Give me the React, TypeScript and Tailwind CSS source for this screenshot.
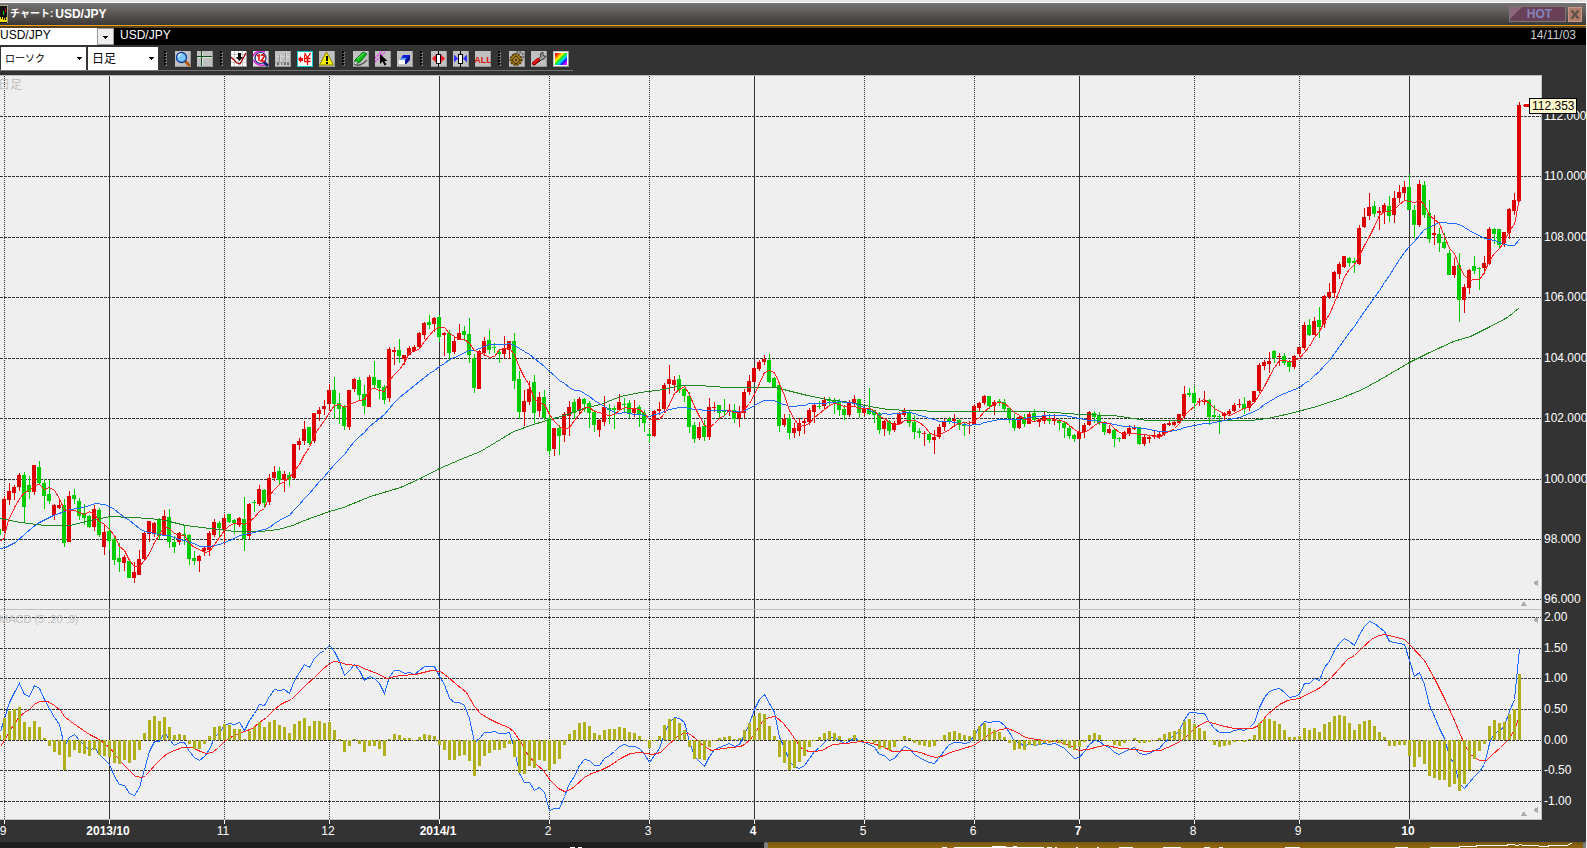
import type { ReactNode } from 'react'

type Point = [number, number]

interface Candle {
  up: boolean
  high: number
  top: number
  bottom: number
  low: number
}

const STEP = 5
const FIRST_X = 4
const ZERO_Y = 740

// u = up day, d = down day, followed by high, body top, body bottom, low
const CANDLE_DATA = `
u496,499,531,532 u483,491,500,505 u485,487,493,500 u473,475,487,491 d472,475,507,523
d476,485,492,499 u465,465,492,495 d461,467,483,484 d479,483,496,509 d480,494,501,504
u504,505,515,520 u500,505,508,509 d499,505,543,547 u491,496,542,542 d489,495,499,504
d498,501,516,520 d504,513,518,525 d515,516,527,528 u505,509,527,531 d508,510,535,537
u524,532,547,555 d516,531,541,550 d535,539,560,565 d543,558,562,572 u555,557,563,571
d559,561,578,578 u562,572,578,583 u550,559,575,575 u531,533,559,560 u521,521,534,542
u522,523,534,537 d518,520,536,540 u510,516,535,536 d509,517,542,548 d536,542,547,553
u532,533,542,545 d525,534,536,545 d534,535,559,565 d551,558,561,565 u555,556,561,572
u547,548,551,556 u531,533,550,556 u519,522,535,537 d521,523,528,538 u514,518,530,545
d514,514,522,523 d519,520,523,534 u517,518,525,527 d497,519,539,551 u503,504,536,539
d500,502,503,512 u485,489,504,506 d489,490,503,507 u474,478,502,505 u466,472,478,481
d467,471,480,485 u471,474,480,492 d472,475,480,486 u444,444,478,479 u438,441,445,450
u421,429,441,445 d427,427,443,445 u413,413,441,443 u407,410,414,421 u400,406,409,415
u384,390,404,411 d377,390,404,419 d393,403,409,424 d405,407,426,430 u390,390,427,430
u378,379,389,392 d377,380,395,401 d385,394,406,414 u375,377,407,407 d361,377,385,389
d380,380,388,399 d385,387,400,404 u347,349,398,402 u347,350,352,365 d339,350,356,363
u355,355,359,365 u346,348,355,355 u345,347,351,352 u332,333,347,349 u322,323,335,339
d315,322,325,329 u317,318,324,332 d315,317,337,342 u332,333,335,356 d330,333,353,361
u337,341,352,354 u324,333,340,340 d326,331,335,341 d318,334,355,363 d354,358,388,393
u350,351,389,389 u337,341,353,356 d330,340,350,354 d343,347,348,353 d349,352,354,363
u336,348,354,358 u341,341,350,359 d333,341,381,389 d371,379,412,419 u390,401,412,426
u381,389,402,405 d375,382,413,423 u392,397,411,417 d390,397,418,420 d405,418,451,455
u428,428,449,456 d425,428,436,455 u412,414,435,442 u401,407,416,436 d399,402,413,419
u397,399,411,415 d398,399,404,412 d401,403,413,428 d410,412,425,432 u419,420,430,437
u396,407,422,426 d404,408,410,424 d406,408,410,429 u394,402,410,411 d398,404,405,413
d400,403,413,418 u400,408,413,417 d405,407,415,427 d410,413,423,432 d429,434,436,443
u410,411,436,437 u402,409,411,415 u383,385,409,411 u365,379,384,394 u376,380,385,391
d375,379,390,393 d388,389,396,402 d392,396,427,433 d422,425,439,443 u422,427,438,440
d420,426,437,441 u398,407,437,440 u402,407,408,412 d405,405,413,419 d399,410,412,416
u404,410,411,416 d404,410,419,423 u406,412,418,427 u389,392,413,418 u375,381,392,395
u367,368,382,382 u360,362,369,371 u355,359,362,365 d354,360,382,383 d377,378,388,388
d383,385,426,432 u414,419,425,427 d414,418,433,439 u423,428,433,438 u418,423,431,436
u418,421,423,434 u408,410,422,425 u404,405,412,423 d401,406,407,409 u397,400,406,410
d397,399,401,405 d398,400,403,414 d399,401,410,416 d405,409,415,420 u400,403,415,417
u395,399,404,407 d399,399,413,418 u407,409,413,416 d388,409,414,415 d410,410,415,423
d412,413,430,434 u420,421,429,436 d420,421,431,435 u421,423,430,432 u412,414,424,424
u408,410,415,417 d411,412,423,427 d415,422,432,439 d428,431,433,438 u431,433,434,446
d432,434,440,443 u430,437,440,454 u424,427,437,439 u419,421,427,431 d417,419,421,424
u414,419,421,427 d419,420,425,430 d423,425,426,436 u421,425,426,434 u404,406,424,425
u402,403,408,411 u395,396,403,405 d396,396,406,409 u400,402,406,415 d399,401,402,406
d399,402,409,412 d407,408,418,423 d414,419,428,431 u415,417,428,429 d414,417,424,427
u412,414,424,424 d409,413,420,422 u419,420,422,427 u412,416,421,424 d414,418,421,424
u414,419,421,425 d419,420,423,430 d421,423,428,438 d426,428,436,439 d434,435,439,442
u430,432,439,439 u423,425,432,438 u411,412,425,426 d411,413,417,423 d412,415,423,425
d421,422,432,435 u425,429,433,434 d429,430,439,447 d437,438,439,442 u431,432,439,439
u425,428,434,436 u425,427,429,430 d427,427,444,445 u434,437,444,446 u436,437,439,443
u431,435,437,439 u431,434,437,439 u423,424,434,436 u421,423,425,426 u421,422,425,426
u414,414,423,423 u386,394,416,418 d388,393,395,397 d387,393,403,409 u398,401,402,406
u391,401,402,405 d399,400,417,425 d405,415,417,419 d414,416,417,434 u412,413,416,420
u409,411,414,415 u403,405,411,412 u399,404,405,408 d397,404,409,414 u400,401,408,411
u391,391,402,402 u363,365,391,393 u360,362,366,370 u352,361,364,373 d350,351,358,363
u353,356,357,366 d353,356,363,365 d360,362,367,372 u355,356,367,369 u347,347,354,357
u322,325,348,350 d319,325,335,336 u317,321,335,335 d307,320,327,338 u295,296,324,328
u283,292,297,299 u271,272,293,298 u262,264,274,279 u256,256,267,268 d257,258,263,267
d258,261,263,273 u225,228,264,265 u208,217,227,228 u193,207,216,220 d201,206,214,217
u207,211,213,230 u203,205,212,224 d196,206,216,222 u191,198,215,223 u185,192,198,203
u181,187,193,201 d174,187,210,210 d205,210,225,238 u180,184,225,227 d181,185,215,218
d200,213,239,243 u215,233,235,245 d228,234,243,252 d233,242,248,249 d250,253,275,275
u258,266,275,278 d253,265,300,322 u284,287,300,313 u269,270,288,294 d256,266,271,274
d267,268,269,290 u256,263,268,274 u227,229,264,265 d228,229,234,244 d229,229,245,249
u232,232,243,247 u208,209,233,239 u193,200,211,215 u102,105,201,202`

const HISTOGRAM = [
  22, 29, 31, 33, 18, 13, 19, 13, 2, -6, -12, -15, -30, -17, -10, -13, -14, -16, -10, -15,
  -16, -17, -23, -24, -20, -23, -20, -10, 7, 20, 24, 19, 23, 13, 5, 6, 5, -4, -9, -9,
  -4, 4, 13, 14, 16, 15, 11, 11, 1, 9, 13, 18, 13, 18, 20, 15, 13, 7, 16, 19,
  22, 14, 19, 19, 17, 18, 10, 1, -12, -6, 1, -4, -12, -6, -6, -9, -16, 1, 6, 5,
  2, 2, 0, 3, 6, 5, 4, -5, -10, -20, -20, -16, -15, -21, -36, -26, -16, -13, -10, -10,
  -8, -4, -17, -33, -34, -26, -28, -20, -21, -31, -24, -19, -5, 6, 10, 17, 18, 14, 7, 5,
  10, 11, 11, 13, 12, 8, 7, 4, -1, -8, -1, 4, 15, 21, 22, 17, 10, -7, -19, -19,
  -20, -7, 0, 2, 3, 4, 1, 2, 10, 17, 24, 27, 26, 14, 4, -17, -23, -30, -28, -22,
  -16, -7, 0, 3, 7, 9, 7, 4, 0, 2, 5, 0, 0, -1, -3, -9, -8, -10, -7, -1,
  4, 2, -3, -5, -6, -7, -6, -1, 5, 8, 9, 7, 5, 4, 10, 14, 17, 12, 10, 8,
  3, -3, -10, -9, -10, -5, -6, -5, -3, -3, -2, -3, -5, -8, -10, -7, -2, 5, 7, 5,
  0, -1, -5, -6, -3, 0, 2, -3, -3, -2, 0, 2, 6, 8, 9, 11, 19, 21, 16, 12,
  9, 0, -5, -7, -6, -5, -2, -1, -2, 1, 5, 17, 21, 21, 19, 16, 10, 3, 3, 4,
  12, 10, 12, 8, 16, 18, 24, 25, 24, 17, 10, 16, 19, 20, 14, 8, 3, -6, -6, -5,
  -5, -16, -27, -17, -24, -36, -38, -40, -40, -47, -44, -51, -44, -30, -19, -11, -4, 14, 20, 17,
  18, 26, 31, 66,
]

const SIGNAL: Point[] = [
  [0, 746], [4, 740], [9, 731], [14, 723], [19, 716], [24, 712], [29, 709], [34, 704], [39, 701],
  [47, 701], [54, 705], [60, 710], [64, 716], [70, 721], [76, 725], [83, 730], [89, 734], [97, 738],
  [104, 743], [110, 748], [116, 756], [122, 763], [130, 771], [135, 776], [142, 777], [145, 775],
  [150, 770], [155, 764], [162, 757], [167, 753], [174, 750], [182, 747], [192, 747], [200, 751],
  [206, 753], [212, 752], [218, 747], [224, 741], [230, 737], [236, 734], [244, 731], [252, 728],
  [259, 722], [266, 717], [273, 710], [280, 704], [286, 701], [291, 699], [298, 692], [306, 684],
  [314, 677], [322, 669], [329, 663], [334, 661], [340, 662], [346, 664], [357, 665], [366, 669],
  [374, 672], [379, 674], [386, 678], [400, 675], [415, 674], [423, 672], [431, 670], [440, 671],
  [448, 677], [456, 684], [466, 692], [474, 706], [480, 713], [488, 718], [498, 723], [508, 727],
  [513, 731], [520, 741], [527, 754], [536, 764], [543, 770], [550, 780], [558, 788], [564, 791],
  [570, 789], [574, 786], [584, 777], [591, 773], [600, 770], [610, 765], [620, 758], [630, 753],
  [640, 752], [652, 754], [660, 752], [667, 745], [676, 737], [684, 732], [690, 734], [696, 739],
  [704, 746], [711, 750], [722, 748], [732, 747], [740, 746], [744, 744], [750, 739], [756, 730],
  [762, 721], [768, 717], [775, 716], [783, 723], [790, 732], [800, 747], [808, 751], [814, 751],
  [822, 750], [832, 744], [846, 743], [860, 741], [872, 743], [882, 746], [892, 751], [910, 750],
  [920, 752], [928, 755], [935, 757], [941, 756], [950, 752], [963, 748], [973, 745], [982, 739],
  [990, 733], [1000, 729], [1007, 728], [1015, 731], [1025, 737], [1036, 739], [1060, 742],
  [1070, 745], [1078, 750], [1088, 749], [1098, 746], [1106, 745], [1120, 748], [1137, 749],
  [1144, 751], [1160, 750], [1174, 744], [1184, 738], [1193, 729], [1200, 724], [1207, 721],
  [1220, 725], [1234, 728], [1252, 728], [1258, 725], [1267, 714], [1279, 704], [1287, 700],
  [1299, 698], [1320, 687], [1330, 678], [1347, 659], [1354, 655], [1360, 649], [1372, 638],
  [1379, 635], [1385, 634], [1404, 639], [1410, 645], [1424, 660], [1434, 678], [1445, 700],
  [1454, 720], [1464, 744], [1470, 754], [1479, 760], [1486, 760], [1492, 754], [1500, 747],
  [1507, 740], [1514, 730], [1519, 715],
]

const LONG_AVERAGE: Point[] = [
  [0, 518], [20, 522], [45, 525], [70, 525], [85, 521], [95, 519], [110, 516], [150, 518], [165, 520],
  [185, 525], [210, 528], [235, 531], [260, 531], [278, 529], [292, 525], [304, 520], [315, 516],
  [329, 511], [343, 507], [370, 496], [400, 487], [420, 478], [439, 468], [460, 459], [480, 451],
  [500, 439], [513, 431], [533, 424], [550, 419], [567, 414], [583, 408], [600, 404], [620, 396],
  [640, 392], [663, 389], [680, 385], [698, 385], [727, 387], [775, 387], [787, 390], [807, 395],
  [827, 399], [850, 402], [870, 406], [887, 409], [910, 410], [943, 411], [1040, 411], [1080, 414],
  [1113, 415], [1133, 418], [1147, 420], [1250, 420], [1267, 418], [1290, 413], [1316, 406],
  [1340, 398], [1362, 389], [1380, 379], [1409, 362], [1427, 353], [1453, 341], [1470, 336],
  [1488, 327], [1507, 317], [1519, 307],
]

// The averages need earlier closes than the ones listed, so their heads are given
const SHORT_HEAD: Point[] = [[0, 540], [3, 539], [8, 520], [15, 505], [20, 497]]
const MID_HEAD: Point[] = [
  [0, 548], [5, 547], [15, 542], [25, 533], [37, 523], [53, 515], [70, 509], [83, 507], [95, 503],
]

const MONTHS = [
  { x: 4, label: '9' },
  { x: 109, label: '2013/10', major: true },
  { x: 224, label: '11' },
  { x: 329, label: '12' },
  { x: 439, label: '2014/1', major: true },
  { x: 549, label: '2' },
  { x: 649, label: '3' },
  { x: 754, label: '4', major: true },
  { x: 864, label: '5' },
  { x: 974, label: '6' },
  { x: 1079, label: '7', major: true },
  { x: 1194, label: '8' },
  { x: 1299, label: '9' },
  { x: 1409, label: '10', major: true },
]

const LEVELS = [
  { y: 116, label: '112.000' },
  { y: 176, label: '110.000' },
  { y: 237, label: '108.000' },
  { y: 297, label: '106.000' },
  { y: 358, label: '104.000' },
  { y: 418, label: '102.000' },
  { y: 479, label: '100.000' },
  { y: 539, label: '98.000' },
  { y: 599, label: '96.000' },
  { y: 617, label: '2.00' },
  { y: 648, label: '1.50' },
  { y: 678, label: '1.00' },
  { y: 709, label: '0.50' },
  { y: 740, label: '0.00' },
  { y: 770, label: '-0.50' },
  { y: 801, label: '-1.00' },
]

const candles: Candle[] = CANDLE_DATA.trim()
  .split(/\s+/)
  .map((item) => {
    const [high, top, bottom, low] = item.slice(1).split(',').map(Number)
    return { up: item[0] === 'u', high, top, bottom, low }
  })

const closes = candles.map((c) => (c.up ? c.top : c.bottom))
const xAt = (i: number) => FIRST_X + i * STEP

function average(period: number): Point[] {
  const points: Point[] = []
  for (let i = period - 1; i < closes.length; i++) {
    const sum = closes.slice(i - period + 1, i + 1).reduce((a, b) => a + b, 0)
    points.push([xAt(i), Math.round(sum / period)])
  }
  return points
}

function valueAt(points: Point[], x: number) {
  const next = points.findIndex((p) => p[0] >= x)
  if (next <= 0) return points[0][1]
  const [x0, y0] = points[next - 1]
  const [x1, y1] = points[next]
  return y0 + ((y1 - y0) * (x - x0)) / (x1 - x0)
}

const toPoints = (points: Point[]) => points.map(([x, y]) => `${x + 0.5},${y + 0.5}`).join(' ')

const shortAverage = [...SHORT_HEAD, ...average(5)]
const midAverage = [...MID_HEAD, ...average(21)]
const macd: Point[] = [
  [0, 731],
  ...HISTOGRAM.map((h, i): Point => [xAt(i), Math.round(valueAt(SIGNAL, xAt(i)) - h)]),
]

function Line({ points, color }: { points: Point[]; color: string }) {
  return <polyline points={toPoints(points)} fill="none" stroke={color} strokeWidth="1" />
}

function Chart() {
  return (
    <svg
      viewBox="0 75 1586 767"
      className="block h-auto w-full"
      shapeRendering="crispEdges"
      fontFamily="'Liberation Sans', 'Noto Sans CJK JP', sans-serif"
      fontSize="12"
      role="img"
      aria-label="USD/JPY"
    >
      <rect x="0" y="75" width="1586" height="767" fill="#333333" />
      <rect x="0" y="75" width="1542" height="745" fill="#c0c0c0" />
      <rect x="0" y="76" width="1541" height="743" fill="#efefef" />

      {LEVELS.map((level) => (
        <g key={level.y}>
          <line x1="0" x2="1541" y1={level.y + 0.5} y2={level.y + 0.5} stroke="#333333" strokeDasharray="3 1" />
          <text x="1544" y={level.y + 4} fill="#ffffff">{level.label}</text>
        </g>
      ))}
      {MONTHS.map((month) => (
        <g key={month.x}>
          <line
            x1={month.x + 0.5}
            x2={month.x + 0.5}
            y1="76"
            y2="819"
            stroke="#333333"
            strokeDasharray={month.major ? undefined : '1 1'}
          />
          <rect x={month.x} y="820" width="1" height="4" fill="#ffffff" />
          <text
            x={month.x - 1}
            y="835"
            fill="#ffffff"
            textAnchor="middle"
            fontWeight={month.major ? 700 : 400}
          >
            {month.label}
          </text>
        </g>
      ))}
      <rect x="0" y="609" width="1541" height="1" fill="#c0c0c0" />
      <text x="-2" y="89" fill="#c0c0c0">日足</text>
      <text x="-1" y="623" fill="#c0c0c0" fontSize="11">MACD (5 ,20 ,9)</text>

      <rect x="0" y="529" width="1" height="6" fill="#00cc00" />
      {candles.map((c, i) => (
        <g key={i} fill={c.up ? '#dd0000' : '#00cc00'}>
          <rect x={xAt(i)} y={c.high} width="1" height={c.low - c.high} />
          <rect x={xAt(i) - 2} y={c.top} width="4" height={c.bottom - c.top} />
        </g>
      ))}
      <Line points={LONG_AVERAGE} color="#1e8a1e" />
      <Line points={midAverage} color="#1e69ff" />
      <Line points={shortAverage} color="#ff2020" />

      <Line points={macd} color="#1e69ff" />
      <Line points={SIGNAL} color="#ff2020" />
      <rect x="0" y="735" width="1" height="5" fill="#b0b01e" />
      {HISTOGRAM.map((h, i) => (
        <rect
          key={i}
          x={xAt(i) - 1}
          y={h > 0 ? ZERO_Y - h : ZERO_Y}
          width="3"
          height={Math.max(Math.abs(h), 1)}
          fill="#b0b01e"
        />
      ))}

      <g fill="#aaaaaa">
        <path d="M1533 583l5-3v6zM1533 620l5-3v6zM1533 810l5-3v6z" />
        <path d="M1524 601l3 5h-6zM1524 811l3 5h-6z" />
      </g>

      <path d="M1523 103h3v-1h3v7h-3v-1h-3z" fill="#ffffff" />
      <path d="M1523 105h1v-1h5v3h-5v-1h-1z" fill="#ee0000" />
      <rect x="1529" y="98" width="48" height="16" fill="#000000" />
      <rect x="1530" y="99" width="46" height="14" fill="#fff8cc" />
      <text x="1532" y="110" fill="#000000">112.353</text>
    </svg>
  )
}

function Arrow({ className }: { className: string }) {
  return (
    <svg viewBox="0 0 5 3" className={`pointer-events-none absolute h-[3px] w-[5px] ${className}`} shapeRendering="crispEdges">
      <path d="M0 0h5v1h-1v1h-1v1h-1v-1h-1v-1h-1z" fill="#000" />
    </svg>
  )
}

function Separator() {
  return (
    <svg viewBox="0 0 4 16" className="mx-px h-4 w-1" shapeRendering="crispEdges" aria-hidden="true">
      {[0, 3, 6, 9, 12].map((y) => (
        <g key={y}>
          <rect x="1" y={y + 1} width="2" height="2" fill="#777" />
          <rect x="0" y={y} width="2" height="2" fill="#000" />
        </g>
      ))}
    </svg>
  )
}

function Tool({ label, children }: { label: string; children: ReactNode }) {
  return (
    <button type="button" aria-label={label} className="h-4 w-4 bg-[#c0c0c0]">
      <svg viewBox="0 0 16 16" className="block h-4 w-4">
        <path d="M0 15.500h15.500v-15.500" fill="none" stroke="#999" />
        {children}
      </svg>
    </button>
  )
}

function Toolbar() {
  return (
    <div className="flex h-[30px] items-start border-t-2 border-[#333333] bg-[#333333]">
      <div className="flex h-6 items-center border-b border-[#777777] pr-1 pl-px">
        <div className="flex gap-0.5">
          <div className="relative">
            <select
              aria-label="チャート種類"
              className="block h-[23px] w-[85px] appearance-none bg-white pl-1 text-[10px] leading-4 text-black outline-none"
            >
              <option>ローソク</option>
            </select>
            <Arrow className="top-[10px] right-1" />
          </div>
          <div className="relative">
            <select
              aria-label="足種"
              className="block h-[23px] w-[70px] appearance-none bg-white pl-1 text-[12px] leading-4 text-black outline-none"
            >
              <option>日足</option>
            </select>
            <Arrow className="top-[10px] right-1" />
          </div>
        </div>
        <div className="ml-[5px] flex items-center gap-1.5">
          <Separator />
          <Tool label="拡大">
            <path d="M10 10l4 4" stroke="#b05a10" strokeWidth="3" strokeLinecap="round" />
            <circle cx="6.500" cy="6.500" r="5" fill="#7cc8ff" stroke="#0a3a9c" strokeWidth="1.300" />
            <path d="M3.500 6c0-2 1.500-3 3-3" stroke="#e0f6ff" strokeWidth="1.500" fill="none" />
          </Tool>
          <Tool label="十字線">
            <path d="M5.500 1v14M1 6.500h14" stroke="#d8ecd8" strokeWidth="1" shapeRendering="crispEdges" />
            <path d="M4.500 0v15M0 5.500h15" stroke="#0a4a1a" strokeWidth="1" shapeRendering="crispEdges" />
          </Tool>
          <Separator />
          <Tool label="テクニカル">
            <rect width="15" height="15" fill="#fff" />
            <path d="M3.500 0v15M7.500 0v15M11.500 0v15M0 3.500h15M0 7.500h15M0 11.500h15" stroke="#c8c8c8" />
            <path d="M0 6l6 6 3 1 6-11" stroke="#a00000" strokeWidth="1.300" fill="none" />
            <path d="M7 2h3v4h2l-3.500 4-3.500-4h2z" fill="#000" />
          </Tool>
          <Tool label="期間">
            <rect width="15" height="15" fill="#ddd" />
            <path d="M0 5c3-5 7-6 12-4M0 9c4 5 7 6 12 5" stroke="#e020e0" strokeWidth="1.500" fill="none" />
            <path d="M11 11l4 4" stroke="#10206a" strokeWidth="3" />
            <circle cx="7.500" cy="7" r="5.500" fill="#fff" stroke="#10206a" strokeWidth="1.200" />
            <path d="M4 5l2-1v6M8 5c1-2 4-1 3 1l-3 4h4" stroke="#ee0000" strokeWidth="1.500" fill="none" />
          </Tool>
          <Tool label="四本値">
            <path d="M5.500 3v12M11.500 1v14M1 5.500h14" stroke="#d8d8d8" shapeRendering="crispEdges" />
            <path d="M4.500 4v7M10.500 2v9M0 11.500h15" stroke="#999" shapeRendering="crispEdges" />
            <path d="M2 12h2v2h-2zM6 12h1v2h-1zM9 12h2v2h-2zM12 12h2v2h-2z" fill="#666" />
          </Tool>
          <Tool label="通貨">
            <rect x="0.500" y="0.500" width="15" height="15" fill="#fff" stroke="#10c8d0" />
            <path d="M1 8l3-3v2h2v3h-2v2z" fill="#ee0000" />
            <path d="M7.500 2l3 5 3-5M10.500 7v7M7.500 7.500h6M7.500 10.500h6" stroke="#ee0000" strokeWidth="1.300" fill="none" />
            <path d="M7.500 4v7" stroke="#ee0000" />
          </Tool>
          <Tool label="アラート">
            <path d="M7.500 1l7 13h-14z" fill="#f8f000" stroke="#8a8000" />
            <path d="M7 5h2v5h-2zM7 11h2v2h-2z" fill="#000" />
          </Tool>
          <Separator />
          <Tool label="ライン描画">
            <path d="M1 13c4 3 8 1 13-4" stroke="#555" strokeWidth="1.300" fill="none" />
            <path d="M2 9l8-8 4 2-7 8-5 2z" fill="#10b818" stroke="#087010" />
            <path d="M4 8l7-6" stroke="#70f070" />
            <path d="M2 10l-1 4 4-2z" fill="#fff" stroke="#444" strokeWidth="0.500" />
          </Tool>
          <Tool label="ライン選択">
            <path d="M0 7l7-7M0 11l10-10" stroke="#ff20ff" strokeWidth="1.300" strokeDasharray="2 1" />
            <path d="M5 3v10l2.500-2.500 2 4 2-1-2-3.500h3z" fill="#000" />
          </Tool>
          <Tool label="消去">
            <path d="M6 4h7v5l-4 4h-2z" fill="#0818b8" />
            <path d="M6 4h7l-4 5h-6z" fill="#0a20d8" />
            <path d="M9 9l4-5v4l-4 5z" fill="#001088" />
            <path d="M4.500 7h5l-1.500 2h-5z" fill="#6aa8ff" />
            <path d="M2 9h6v4h-6z" fill="#ffffff" />
          </Tool>
          <Separator />
          <Tool label="足幅を広げる">
            <path d="M1 7.500l4-4v8zM14 7.500l-4-4v8z" fill="#ee2020" />
            <path d="M7.500 0v16" stroke="#000" />
            <rect x="5.500" y="3.500" width="4" height="9" fill="#fff" stroke="#000" />
          </Tool>
          <Tool label="足幅を狭める">
            <path d="M5 7.500l-4-4v8zM10 7.500l4-4v8z" fill="#3030ff" />
            <path d="M7.500 0v16" stroke="#000" />
            <rect x="5.500" y="3.500" width="4" height="9" fill="#fff" stroke="#000" />
          </Tool>
          <Tool label="全表示">
            <text
              x="8"
              y="12"
              textAnchor="middle"
              fontSize="9"
              fontWeight="700"
              fill="#e01010"
              fontFamily="'Liberation Sans Narrow', 'Liberation Sans', sans-serif"
            >
              ALL
            </text>
          </Tool>
          <Separator />
          <Tool label="設定">
            <circle cx="10" cy="5.500" r="4.500" fill="none" stroke="#666" strokeWidth="2" strokeDasharray="2 1" />
            <circle cx="7" cy="8.500" r="5.500" fill="#a07820" stroke="#5a4008" strokeWidth="2" strokeDasharray="2 1" />
            <path d="M7 5l4 4-4 4-4-4z" fill="#b08828" stroke="#4a3008" />
            <path d="M6 8h2v2h-2z" fill="#333" />
          </Tool>
          <Tool label="ツール">
            <path d="M7 8l3-3-1-2 3-2v3l1 1h2l-2 3-3 1-2 2z" fill="#999" stroke="#222" strokeWidth="0.800" />
            <path d="M3 12.500l4-3.500" stroke="#700" strokeWidth="4" strokeLinecap="round" />
            <path d="M3 12l4-3.500" stroke="#e81010" strokeWidth="2.500" strokeLinecap="round" />
          </Tool>
          <Tool label="配色">
            <defs>
              <linearGradient id="rainbow" x1="0" y1="0" x2="1" y2="1">
                <stop offset="0.080" stopColor="#ff0000" />
                <stop offset="0.240" stopColor="#ff9000" />
                <stop offset="0.360" stopColor="#ffff00" />
                <stop offset="0.480" stopColor="#00e020" />
                <stop offset="0.600" stopColor="#00e8ff" />
                <stop offset="0.740" stopColor="#1020ff" />
                <stop offset="0.900" stopColor="#ff00ff" />
              </linearGradient>
            </defs>
            <rect x="1" y="1" width="14" height="14" fill="#fff" />
            <rect x="2" y="2" width="12" height="12" fill="url(#rainbow)" />
          </Tool>
        </div>
      </div>
    </div>
  )
}

function TitleBar() {
  return (
    <header className="flex h-[22px] items-center justify-between bg-linear-to-b from-[#777573] to-[#3c3835]">
      <div className="flex items-center">
        <svg viewBox="0 0 8 18" className="h-[18px] w-2" shapeRendering="crispEdges" aria-hidden="true">
          <rect width="8" height="18" fill="#a8a080" />
          <rect width="7" height="17" y="1" fill="#111" />
          <path d="M0 12h1v2h1v-2h1v3h1v-2h1v2h1v-3h1v5h-7z" fill="#f0e000" />
          <path d="M3 6h1v4h-1z" fill="#0c0" />
          <path d="M5 4h1v3h-1z" fill="#d00" />
        </svg>
        <h1 className="ml-0.5 flex items-center gap-0.5 text-[12px] leading-4 font-bold text-white">
          <span className="text-[10px]">チャート:</span>
          <span>USD/JPY</span>
        </h1>
      </div>
      <div className="flex items-center gap-0.5 pr-1">
        <button
          type="button"
          className="relative h-4 w-[57px] border border-[#777777] bg-[#6a4058] pl-1 text-[12px] leading-[14px] font-bold text-[#8484bc]"
        >
          <svg viewBox="0 0 12 14" className="absolute top-0 left-0 h-[14px] w-3" aria-hidden="true">
            <path d="M0 0h12l-12 12z" fill="#8a6878" />
          </svg>
          HOT
        </button>
        <button type="button" aria-label="閉じる" className="h-[15px] w-[14px] border border-[#c89888] bg-[#b07c6a]">
          <svg viewBox="0 0 12 13" className="block h-[13px] w-3">
            <path d="M2.500 2.500l7 8M9.500 2.500l-7 8" stroke="#5a5048" strokeWidth="2" />
          </svg>
        </button>
      </div>
    </header>
  )
}

function SymbolBar() {
  return (
    <div className="flex h-[17px] items-start bg-black text-[12px] leading-[15px]">
      <div className="relative">
        <select
          aria-label="通貨ペア"
          className="block h-[17px] w-[114px] appearance-none bg-white pb-0.5 text-[12px] leading-[15px] text-black outline-none"
        >
          <option>USD/JPY</option>
        </select>
        <span className="pointer-events-none absolute top-0 right-0 h-[17px] w-[17px] border border-[#999999] bg-[#eeeeee]" />
        <Arrow className="top-[8px] right-1.5" />
      </div>
      <span className="ml-1.5 text-white">USD/JPY</span>
      <span className="mr-2.5 ml-auto text-[#cccccc]">14/11/03</span>
    </div>
  )
}

function Navigator() {
  return (
    <div className="flex h-1.5">
      <svg viewBox="0 0 764 6" preserveAspectRatio="none" className="h-1.5 grow-764 basis-0 bg-[#1e1e1e]" aria-hidden="true">
        <path d="M570 5h5v1h-5zM578 5h4v1h-4z" fill="#fff" />
      </svg>
      <div className="w-1 rounded-t-sm bg-[#808080]" />
      <svg
        viewBox="0 0 815 6"
        preserveAspectRatio="none"
        className="h-1.5 grow-815 basis-0 bg-linear-to-b from-[#76560f] to-[#93680c]"
        shapeRendering="crispEdges"
        aria-hidden="true"
      >
        <path
          d="M174 5h5v1h-5zM186 5h90v1h-90zM224 4h14v1h-14zM245 4h4v1h-4zM279 5h5v1h-5zM287 5h2v1h-2zM308 5h2v1h-2zM329 5h2v1h-2zM351 5h14v1h-14zM395 5h18v1h-18zM436 5h6v1h-6zM451 5h4v1h-4zM517 5h15v1h-15zM627 5h13v1h-13zM662 5h30v1h-30zM691 4h18v1h-18zM708 3h32v1h-32zM739 2h8v1h-8zM747 3h4v1h-4zM751 2h3v1h-3zM754 3h17v1h-17zM771 4h10v1h-10zM780 3h20v1h-20zM800 2h2v1h-2zM802 1h2v1h-2z"
          fill="#fff"
        />
      </svg>
      <div className="w-[3px] rounded-t-sm bg-[#808080]" />
    </div>
  )
}

export default function App() {
  return (
    <main className="min-h-screen border-r border-[#f4f4f4] bg-[#333333] font-['Liberation_Sans','Noto_Sans_CJK_JP',sans-serif]">
      <div className="h-[3px] border-b border-white bg-[#e4e4e4]" />
      <TitleBar />
      <div className="h-[3px] border-t border-[#ffa61e] bg-[#5c4020]" />
      <SymbolBar />
      <Toolbar />
      <Chart />
      <Navigator />
    </main>
  )
}
